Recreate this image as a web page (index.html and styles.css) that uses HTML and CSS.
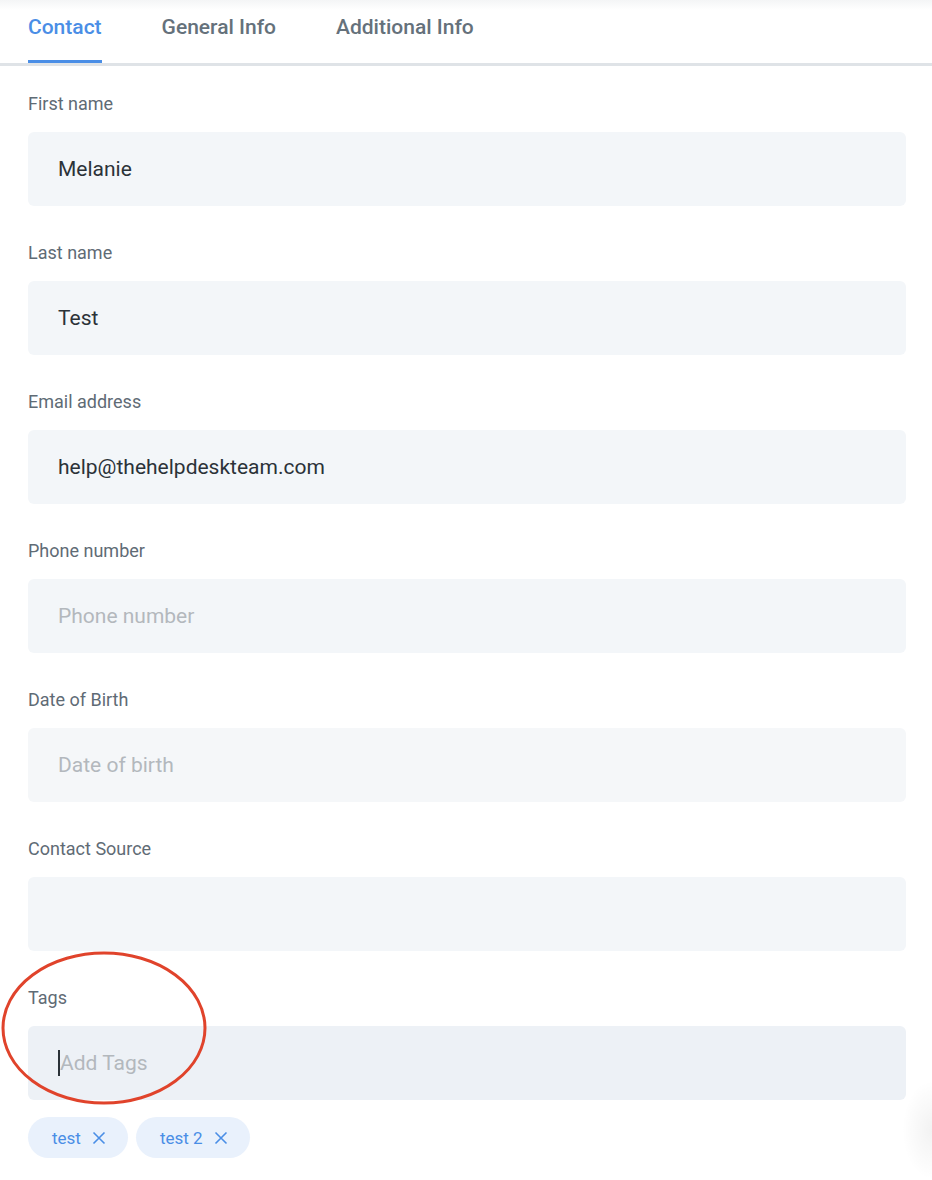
FILE: index.html
```html
<!DOCTYPE html>
<html lang="en">
<head>
    <meta charset="UTF-8">
    <title>Contact</title>
    <link rel="stylesheet" href="styles.css">
</head>
<body>
    <div class="tabs">
        <div class="tab active">Contact</div>
        <div class="tab">General Info</div>
        <div class="tab">Additional Info</div>
    </div>

    <div class="form">
        <div class="field">
            <div class="label">First name</div>
            <div class="input">Melanie</div>
        </div>
        <div class="field">
            <div class="label">Last name</div>
            <div class="input">Test</div>
        </div>
        <div class="field">
            <div class="label">Email address</div>
            <div class="input">help@thehelpdeskteam.com</div>
        </div>
        <div class="field">
            <div class="label">Phone number</div>
            <div class="input placeholder">Phone number</div>
        </div>
        <div class="field">
            <div class="label">Date of Birth</div>
            <div class="input placeholder light">Date of birth</div>
        </div>
        <div class="field">
            <div class="label">Contact Source</div>
            <div class="input"></div>
        </div>
        <div class="field tags-field">
            <div class="label">Tags</div>
            <div class="input placeholder focused"><span class="caret"></span>Add Tags</div>
            <div class="chips">
                <span class="chip">test
                    <svg width="14" height="14" viewBox="0 0 14 14"><path d="M1.5 1.5 L12.5 12.5 M12.5 1.5 L1.5 12.5" stroke="#4a8ee6" stroke-width="1.6" fill="none"/></svg>
                </span>
                <span class="chip">test 2
                    <svg width="14" height="14" viewBox="0 0 14 14"><path d="M1.5 1.5 L12.5 12.5 M12.5 1.5 L1.5 12.5" stroke="#4a8ee6" stroke-width="1.6" fill="none"/></svg>
                </span>
            </div>
            <!-- red annotation circle -->
            <svg class="annotation" width="208" height="158" viewBox="0 0 208 158">
                <ellipse cx="104" cy="79" rx="101" ry="75" stroke="#e0432b" stroke-width="3" fill="none"/>
            </svg>
        </div>
    </div>
    <div class="edge-shadow"></div>
</body>
</html>
```

FILE: styles.css
```css
body {
    margin: 0;
    font-family: Roboto, "Liberation Sans", Arial, sans-serif;
    background-color: #fff;
    color: #2b3238;
    position: relative;
    height: 1180px;
    overflow: hidden;
}
.tabs {
    display: flex;
    gap: 60px;
    padding: 0 28px;
    border-bottom: 3px solid #dfe3e7;
    background: linear-gradient(#f4f5f6, #fff 10px);
}
.tab {
    height: 63px;
    padding-top: 14px;
    box-sizing: border-box;
    font-size: 21px;
    line-height: 26px;
    font-weight: 500;
    color: #65717b;
    border-bottom: 3px solid transparent;
}
.tab.active {
    color: #4a8ee6;
    border-bottom-color: #4a8ee6;
}
.form {
    padding: 28px 26px 0 28px;
}
.field {
    margin-bottom: 37px;
}
.label {
    font-size: 18px;
    line-height: 20px;
    color: #5f6b75;
    margin-bottom: 18px;
}
.input {
    height: 74px;
    box-sizing: border-box;
    padding-left: 30px;
    display: flex;
    align-items: center;
    font-size: 21px;
    color: #2b3238;
    background-color: #f3f6f9;
    border-radius: 6px;
}
.input.placeholder {
    color: #b3b8bd;
}
.input.light {
    background-color: #f5f7f9;
}
.input.focused {
    background-color: #edf1f6;
}
.caret {
    display: inline-block;
    width: 2px;
    height: 26px;
    background-color: #2b3238;
}
.tags-field {
    position: relative;
}
.chips {
    display: flex;
    gap: 8px;
    margin-top: 17px;
}
.chip {
    display: inline-flex;
    align-items: center;
    gap: 11px;
    height: 41px;
    padding: 0 22px 0 24px;
    border-radius: 21px;
    background-color: #e9f1fc;
    color: #4a8ee6;
    font-size: 17px;
}
.annotation {
    position: absolute;
    left: -28px;
    top: -39px;
}
.edge-shadow {
    position: absolute;
    right: 0;
    top: 1080px;
    width: 30px;
    height: 100px;
    background: radial-gradient(ellipse at right center, rgba(0,0,0,0.05), rgba(0,0,0,0) 70%);
}
```
